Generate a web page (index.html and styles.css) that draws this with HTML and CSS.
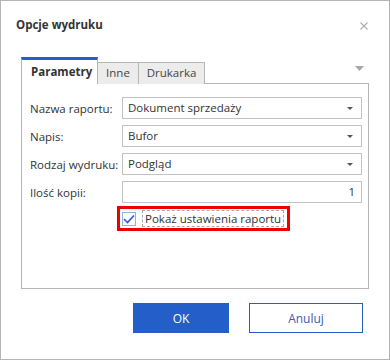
FILE: index.html
```html
<!DOCTYPE html>
<html lang="pl">
<head>
    <meta charset="UTF-8">
    <title>Opcje wydruku</title>
    <link rel="stylesheet" href="styles.css">
</head>
<body>
    <div class="dialog">
        <div class="header">
            <h1 class="title">Opcje wydruku</h1>
            <svg class="close" width="8" height="8" viewBox="0 0 8 8">
                <path d="M0.5 0.5L7.5 7.5M7.5 0.5L0.5 7.5" stroke="#b0b0b0" stroke-width="1.2"/>
            </svg>
        </div>
        <div class="tabs">
            <div class="tab active">Parametry</div>
            <div class="tab tab-inne">Inne</div>
            <div class="tab tab-drukarka">Drukarka</div>
            <svg class="tabs-menu" width="9" height="5" viewBox="0 0 9 5">
                <path d="M0 0H9L4.5 5Z" fill="#a8a8a8"/>
            </svg>
        </div>
        <div class="panel">
            <div class="row">
                <label class="label">Nazwa raportu:</label>
                <div class="field select">Dokument sprzedaży<span class="caret"></span></div>
            </div>
            <div class="row">
                <label class="label">Napis:</label>
                <div class="field select">Bufor<span class="caret"></span></div>
            </div>
            <div class="row">
                <label class="label">Rodzaj wydruku:</label>
                <div class="field select">Podgląd<span class="caret"></span></div>
            </div>
            <div class="row">
                <label class="label">Ilość kopii:</label>
                <div class="field number">1</div>
            </div>
            <div class="check-row">
                <div class="highlight">
                    <span class="checkbox">
                        <svg width="12" height="10" viewBox="0 0 12 10">
                            <path d="M1 5L4.5 8.5L11 1.5" fill="none" stroke="#2a5cc8" stroke-width="1.6"/>
                        </svg>
                    </span>
                    <span class="check-label">Pokaż ustawienia raportu</span>
                </div>
            </div>
        </div>
        <div class="footer">
            <button class="btn primary">OK</button>
            <button class="btn">Anuluj</button>
        </div>
    </div>
</body>
</html>
```

FILE: styles.css
```css
body {
    margin: 0;
    font-family: "Open Sans", "Noto Sans", sans-serif;
    font-size: 11.5px;
    color: #333;
    background: #fff;
}
.dialog {
    box-sizing: border-box;
    width: 390px;
    height: 360px;
    border: 1px solid #b5b5b5;
    padding: 0 20px;
}
.header {
    display: flex;
    justify-content: space-between;
    align-items: center;
    height: 46px;
}
.title {
    margin: 0 0 0 -5px;
    font-size: 11.5px;
    font-weight: bold;
    color: #333;
}
.close { margin-right: 1px; margin-top: 4px; }
.tabs {
    display: flex;
    align-items: flex-end;
    height: 37px;
    margin-bottom: -1px;
}
.tab {
    box-sizing: border-box;
    height: 22px;
    line-height: 20px;
    text-align: center;
    background: #ececec;
    border: 1px solid #b5b5b5;
    border-bottom: none;
    border-left: none;
    color: #444;
}
.tab-inne { width: 41px; }
.tab-drukarka { width: 66px; }
.tab.active {
    position: relative;
    z-index: 1;
    height: 27px;
    width: 77px;
    padding-left: 9px;
    text-align: left;
    line-height: 24px;
    background: #fff;
    border-top: 3px solid #2a5cc8;
    border-left: 1px solid #b5b5b5;
    font-weight: bold;
    color: #333;
}
.tabs-menu {
    margin-left: auto;
    margin-right: 5px;
    margin-bottom: 13px;
}
.panel {
    box-sizing: border-box;
    height: 206px;
    border: 1px solid #b5b5b5;
    padding: 13px 6px 0 8px;
}
.row {
    display: flex;
    align-items: center;
    height: 22px;
    margin-bottom: 6px;
}
.label {
    width: 92px;
    flex: none;
    white-space: nowrap;
    color: #333;
}
.field {
    box-sizing: border-box;
    flex: 1;
    height: 22px;
    border: 1px solid #c3c3c3;
    padding: 0 5px;
    line-height: 20px;
    display: flex;
    align-items: center;
}
.select { justify-content: space-between; }
.number { justify-content: flex-end; padding-right: 6px; }
.caret {
    width: 0;
    height: 0;
    border-left: 3px solid transparent;
    border-right: 3px solid transparent;
    border-top: 3px solid #555;
    margin-right: 3px;
}
.check-row {
    display: flex;
    padding-left: 87px;
    margin-top: -3px;
}
.highlight {
    display: flex;
    align-items: center;
    gap: 6px;
    border: 3px solid #ee0000;
    padding: 0 3px 0 2px;
    height: 19px;
}
.checkbox {
    box-sizing: border-box;
    width: 14px;
    height: 14px;
    border: 1px solid #8fb2e3;
    display: flex;
    align-items: center;
    justify-content: center;
}
.check-label {
    border: 1px dashed #aaa;
    padding: 0 2px;
    line-height: 15px;
}
.footer {
    display: flex;
    justify-content: flex-end;
    gap: 20px;
    padding-top: 14px;
    padding-right: 6px;
}
.btn {
    box-sizing: border-box;
    width: 114px;
    height: 30px;
    border: 1px solid #2a5cc8;
    background: #fff;
    color: #3e5cb6;
    font-family: "Open Sans", "Noto Sans", sans-serif;
    font-size: 12px;
}
.btn.primary {
    width: 96px;
    background: #245ec8;
    color: #fff;
}
```
